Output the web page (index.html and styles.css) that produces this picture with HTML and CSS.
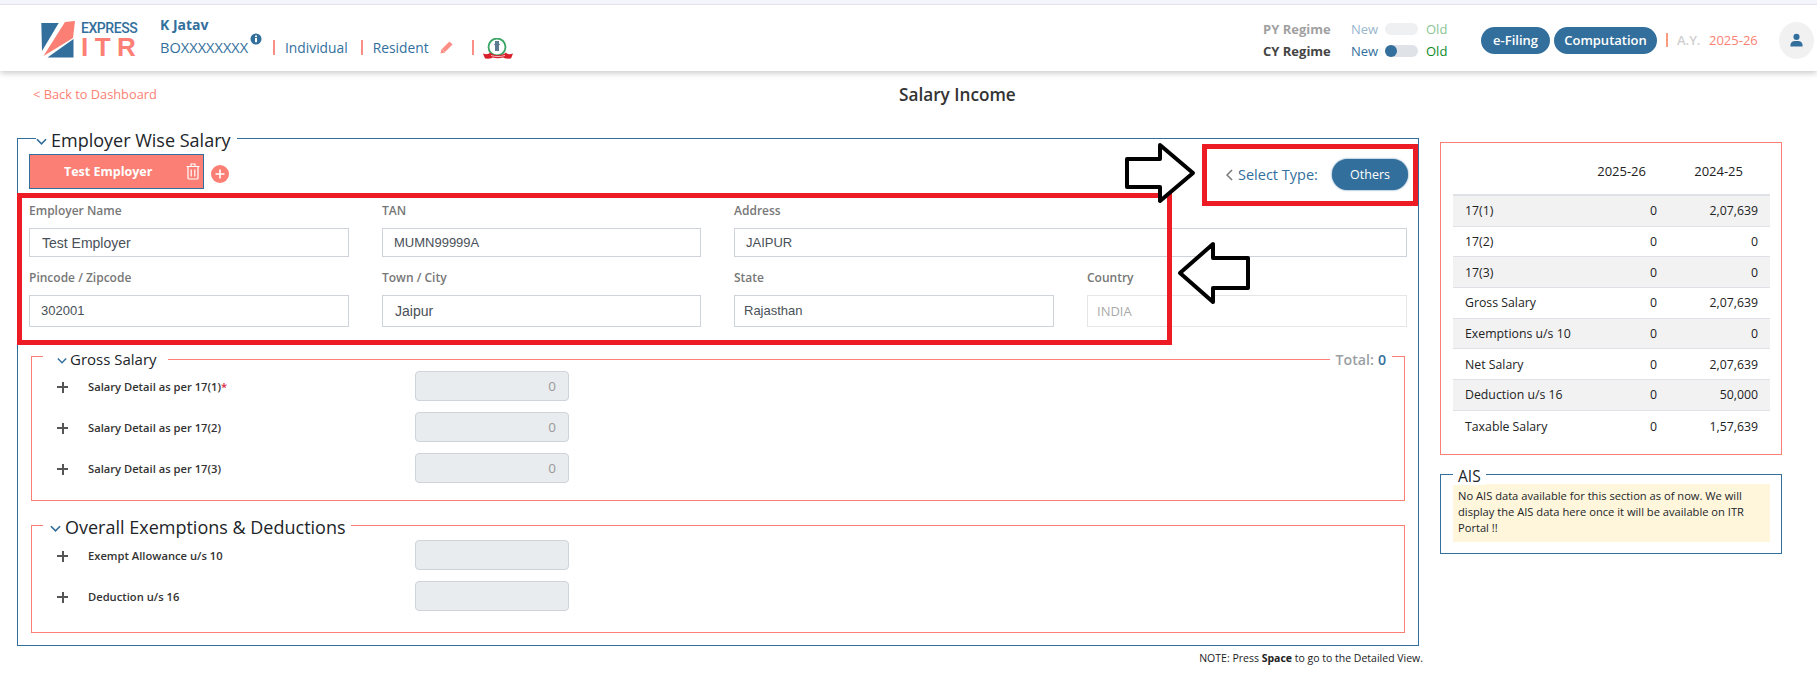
FILE: index.html
```html
<!DOCTYPE html>
<html lang="en">
<head>
<meta charset="utf-8">
<title>Salary Income</title>
<link rel="stylesheet" href="styles.css">
</head>
<body>
<div class="page">
  <header class="topbar">
    <div class="brand">
      <svg class="brand-mark" viewBox="0 0 34 38"><polygon points="0.3,2 17.7,2 1,30" fill="#336f9c"/><polygon points="24,1 34,0 32,17 2.5,35" fill="#fb7f74"/><polygon points="32.5,18 32.5,36.5 6.5,36.5" fill="#336f9c"/></svg>
      <div class="brand-text"><span class="brand-top">EXPRESS</span><span class="brand-bottom">ITR</span></div>
    </div>
    <div class="who">
      <div class="who-name">K Jatav</div>
      <div class="who-line">
        <span class="who-pan">BOXXXXXXXX</span>
        <svg class="who-info" viewBox="0 0 12 12"><circle cx="6" cy="6" r="5.500" fill="#336f9c"/><rect x="5" y="5" width="2" height="4.200" fill="#fff"/><rect x="5" y="2.500" width="2" height="1.600" fill="#fff"/></svg>
        <span class="who-item who-first">Individual</span>
        <span class="who-item">Resident</span>
        <svg class="who-pencil" viewBox="0 0 14 14"><path d="M3.500 10.500L11 3" stroke="#fb8f85" stroke-width="4.400" fill="none"/><path d="M0.500 13.500l1-4.800 3.800 3.800z" fill="#fb8f85"/></svg>
        <span class="who-bar"></span>
        <svg class="who-emblem" viewBox="0 0 30 21"><circle cx="14" cy="9" r="8.500" fill="#fff" stroke="#3aa566" stroke-width="1.800"/><path d="M12 3h4v2.500l1 1-1 1v5.500h-4V7.500l-1-1 1-1z" fill="#5d7a93"/><path d="M0 15.500c4 1.500 6 .5 7-1 4 3.500 12 3.500 16 0 1 1.500 3 2.500 7 1l-2 5c-5 .5-7-.5-8-1-3 1-7 1-10 0-1 .5-3 1.500-8 1z" fill="#d81f2b"/><path d="M8 17.500c4 1.400 10 1.400 14 0" stroke="#f6b9bd" stroke-width="1" fill="none"/></svg>
      </div>
    </div>
    <div class="regimes">
      <div class="regime regime-off">
        <span class="regime-name">PY Regime</span><span class="regime-new">New</span><span class="switch"></span><span class="regime-old">Old</span>
      </div>
      <div class="regime">
        <span class="regime-name">CY Regime</span><span class="regime-new">New</span><span class="switch"><span class="switch-knob"></span></span><span class="regime-old">Old</span>
      </div>
    </div>
    <div class="pill pill-efile">e-Filing</div>
    <div class="pill pill-comp">Computation</div>
    <span class="ay-bar"></span>
    <span class="ay-label">A.Y.</span>
    <span class="ay-value">2025-26</span>
    <div class="avatar"><svg viewBox="0 0 14 14"><circle cx="7" cy="3.700" r="3.300" fill="#336f9c"/><path d="M.5 14v-1.500C.5 9.500 3 8 5 8h4c2 0 4.500 1.500 4.500 4.500V14z" fill="#336f9c"/></svg></div>
  </header>

  <div class="crumbs">
    <a class="back">&lt; Back to Dashboard</a>
    <h1 class="title">Salary Income</h1>
  </div>

  <main class="content">
    <section class="employer">
      <div class="legend legend-emp"><svg class="chev" viewBox="0 0 12 8"><path d="M1 1l5 5 5-5" fill="none" stroke="#336f9c" stroke-width="1.800"/></svg>Employer Wise Salary</div>
      <div class="tabs">
        <div class="tab"><span class="tab-name">Test Employer</span>
          <svg class="tab-trash" viewBox="0 0 14 17"><path d="M.5 3.500h13M5 3.500V1h4v2.500M2 3.500v11.500a1 1 0 0 0 1 1h8a1 1 0 0 0 1-1V3.500M5.200 6.500v7M8.800 6.500v7" fill="none" stroke="#fff" stroke-width="1.200"/></svg>
        </div>
        <svg class="tab-add" viewBox="0 0 18 18"><circle cx="9" cy="9" r="9" fill="#fb7f74"/><path d="M9 4.500v9M4.500 9h9" stroke="#fff" stroke-width="1.600"/></svg>
        <div class="type">
          <svg class="type-chev" viewBox="0 0 7 12"><path d="M6 1L1 6l5 5" fill="none" stroke="#777" stroke-width="1.500"/></svg>
          <span class="type-label">Select Type:</span>
          <span class="type-btn">Others</span>
        </div>
      </div>
      <div class="form">
        <div class="field"><label class="lbl">Employer Name</label><div class="box">Test Employer</div></div>
        <div class="field"><label class="lbl">TAN</label><div class="box box-sm">MUMN99999A</div></div>
        <div class="field field-wide"><label class="lbl">Address</label><div class="box box-sm">JAIPUR</div></div>
        <div class="field field-b"><label class="lbl">Pincode / Zipcode</label><div class="box box-sm">302001</div></div>
        <div class="field field-b"><label class="lbl">Town / City</label><div class="box">Jaipur</div></div>
        <div class="field field-b"><label class="lbl">State</label><div class="box box-sm box-state">Rajasthan</div></div>
        <div class="field field-b"><label class="lbl">Country</label><div class="box box-off">INDIA</div></div>
      </div>

      <section class="group group-gross">
        <span class="gross-rule"></span>
        <div class="legend legend-gross"><svg class="chev chev-sm" viewBox="0 0 12 8"><path d="M1 1l5 5 5-5" fill="none" stroke="#336f9c" stroke-width="1.800"/></svg>Gross Salary</div>
        <div class="legend legend-total">Total: <b>0</b></div>
        <div class="row"><span class="plus"></span><span class="row-label">Salary Detail as per 17(1)<i class="req">*</i></span><div class="amount">0</div></div>
        <div class="row"><span class="plus"></span><span class="row-label">Salary Detail as per 17(2)</span><div class="amount">0</div></div>
        <div class="row"><span class="plus"></span><span class="row-label">Salary Detail as per 17(3)</span><div class="amount">0</div></div>
      </section>

      <section class="group group-over">
        <div class="legend legend-over"><svg class="chev" viewBox="0 0 12 8"><path d="M1 1l5 5 5-5" fill="none" stroke="#336f9c" stroke-width="1.800"/></svg>Overall Exemptions &amp; Deductions</div>
        <div class="row"><span class="plus"></span><span class="row-label">Exempt Allowance u/s 10</span><div class="amount"></div></div>
        <div class="row"><span class="plus"></span><span class="row-label">Deduction u/s 16</span><div class="amount"></div></div>
      </section>
      <p class="note">NOTE: Press <b>Space</b> to go to the Detailed View.</p>
    </section>

    <aside class="side">
      <div class="summary">
        <div class="s-head"><span></span><span>2025-26</span><span>2024-25</span></div>
        <div class="s-row"><span>17(1)</span><span>0</span><span>2,07,639</span></div>
        <div class="s-row"><span>17(2)</span><span>0</span><span>0</span></div>
        <div class="s-row"><span>17(3)</span><span>0</span><span>0</span></div>
        <div class="s-row"><span>Gross Salary</span><span>0</span><span>2,07,639</span></div>
        <div class="s-row"><span>Exemptions u/s 10</span><span>0</span><span>0</span></div>
        <div class="s-row"><span>Net Salary</span><span>0</span><span>2,07,639</span></div>
        <div class="s-row"><span>Deduction u/s 16</span><span>0</span><span>50,000</span></div>
        <div class="s-row"><span>Taxable Salary</span><span>0</span><span>1,57,639</span></div>
      </div>
      <div class="ais">
        <div class="legend legend-ais">AIS</div>
        <div class="ais-msg">No AIS data available for this section as of now. We will display the AIS data here once it will be available on ITR Portal !!</div>
      </div>
    </aside>
  </main>

  <div class="mark mark-form"></div>
  <div class="mark mark-type"></div>
  <svg class="arrow arrow-r" viewBox="0 0 70 60"><polygon points="2,16 35,16 35,2 68,30 35,58 35,44 2,44" fill="#fff" stroke="#000" stroke-width="4" stroke-linejoin="round"/></svg>
  <svg class="arrow arrow-l" viewBox="0 0 72 62"><polygon points="2,31 35,2 35,16 70,16 70,46 35,46 35,60" fill="#fff" stroke="#000" stroke-width="4" stroke-linejoin="round"/></svg>
</div>
</body>
</html>
```
FILE: styles.css
```css
* { box-sizing: border-box; }
html, body { margin: 0; padding: 0; background: #fff; }
body { font-family: "Open Sans", "Noto Sans", sans-serif; color: #212529; }
.page { position: relative; width: 1817px; height: 694px; overflow: hidden; }

.topbar { display: flex; align-items: center; height: 71px; padding-top: 5px; padding-left: 41px; background: #fff; border-top: 4px solid #f4f5fc; box-shadow: 0 2px 6px rgba(0,0,0,.22); position: relative; }
.topbar::before { content: ""; position: absolute; left: 0; right: 0; top: 0; height: 1px; background: #e1e3ef; }
.brand { display: flex; align-items: center; width: 119px; flex: none; }
.brand-mark { width: 34px; height: 38px; flex: none; }
.brand-text { display: flex; flex-direction: column; margin-left: 6px; font-family: "Roboto", "Liberation Sans", sans-serif; }
.brand-top { font-size: 14px; line-height: 14px; font-weight: 500; color: #336f9c; letter-spacing: -.45px; }
.brand-bottom { font-family: "Liberation Sans", sans-serif; font-size: 26px; line-height: 24px; font-weight: 700; color: #fb7f74; letter-spacing: 6.500px; }
.who { width: 1103px; flex: none; color: #336f9c; font-size: 14px; }
.who-name { font-weight: 700; line-height: 18px; margin-top: -5px; }
.who-line { display: flex; align-items: center; height: 24px; margin-top: 1px; font-weight: 500; }
.who-pan { width: 90px; font-size: 14.600px; }
.who-info { width: 12px; height: 12px; margin-top: -16px; flex: none; }
.who-item { border-left: 2px solid #fb8f85; padding-left: 10px; line-height: 15px; margin-left: 13px; font-size: 13.800px; }
.who-first { margin-left: 11px; }
.who-pencil { width: 14px; height: 14px; margin-left: 11px; flex: none; }
.who-bar { width: 2px; height: 15px; background: #fb8f85; margin-left: 18px; }
.who-emblem { width: 30px; height: 21px; margin-left: 9px; margin-top: 3px; flex: none; }

.regimes { width: 218px; flex: none; }
.regime { display: flex; align-items: center; height: 22px; font-size: 13px; }
.regime-name { width: 88px; font-weight: 700; color: #444; }
.regime-new { width: 34px; color: #336f9c; }
.regime-old { margin-left: 8px; color: #0a8a1e; }
.switch { width: 33px; height: 12px; border-radius: 6px; background: #dfe2e6; display: block; flex: none; }
.switch-knob { display: block; width: 12px; height: 12px; border-radius: 50%; background: #336f9c; }
.regime-off { opacity: .5; }
.pill { height: 27px; line-height: 27px; border-radius: 14px; background: #336f9c; color: #fff; font-size: 13px; font-weight: 600; text-align: center; flex: none; }
.pill-efile { width: 69px; }
.pill-comp { width: 103px; margin-left: 4px; }
.ay-bar { width: 2px; height: 14px; background: #fb9a7f; margin-left: 9px; flex: none; }
.ay-label { width: 32px; margin-left: 9px; font-size: 13px; font-weight: 600; color: #cfcfcf; flex: none; }
.ay-value { width: 70px; font-size: 13px; color: #fb7f74; flex: none; }
.avatar { width: 35px; height: 37px; border-radius: 50%; background: #f1f1f2; display: flex; align-items: center; justify-content: center; flex: none; }
.avatar svg { width: 13px; height: 14px; }

.crumbs { display: grid; grid-template-columns: 866px auto; padding-left: 33px; height: 46px; align-items: center; }
.back { font-size: 12.800px; color: #fb7f74; }
.title { margin: 0; font-size: 17.200px; font-weight: 600; color: #333; }

.content { display: flex; align-items: flex-start; padding-left: 17px; padding-top: 21px; }
.employer { position: relative; width: 1402px; height: 508px; border: 1px solid #336f9c; padding: 15px 10px 12px 11px; flex: none; }

.legend { position: absolute; background: #fff; display: flex; align-items: center; white-space: nowrap; color: #212529; }
.chev { width: 11px; height: 8px; margin-right: 4px; margin-top: 4px; flex: none; }
.chev-sm { width: 10px; margin-right: 3px; margin-top: 3px; }
.legend-emp { left: 18px; top: -9px; height: 20px; padding: 0 6px 0 0; font-size: 18px; font-weight: 500; }
.legend-gross { left: 11px; top: -7px; height: 18px; padding: 0 11px 0 14px; font-size: 15px; }
.legend-total { right: 12px; top: -7px; height: 18px; padding: 0 6px; font-size: 14.200px; color: #9a9fa6; font-weight: 600; }
.legend-total b { color: #336f9c; margin-left: 4px; font-weight: 600; }
.legend-over { left: 11px; top: -9px; height: 20px; padding: 0 5px 0 7px; font-size: 18px; }
.legend-ais { left: 12px; top: -8px; height: 18px; padding: 0 5px; font-size: 15.500px; }

.tabs { display: flex; align-items: flex-start; height: 35px; }
.tab { width: 175px; height: 35px; background: #fb7f74; border: 1px solid #336f9c; display: flex; align-items: center; color: #fff; font-size: 12.500px; font-weight: 700; flex: none; }
.tab-name { width: 156px; padding-left: 34px; }
.tab-trash { width: 14px; height: 17px; flex: none; }
.tab-add { width: 18px; height: 18px; margin: 11px 0 0 7px; flex: none; }
.type { margin-left: auto; display: flex; align-items: center; height: 31px; margin-top: 5px; }
.type-chev { width: 7px; height: 12px; margin-right: 5px; }
.type-label { font-size: 14.500px; font-weight: 500; color: #336f9c; width: 94px; }
.type-btn { width: 76px; height: 31px; line-height: 31px; border-radius: 16px; background: #336f9c; color: #fff; font-size: 12.500px; text-align: center; box-shadow: 0 0 2px #336f9c; }

.form { display: grid; grid-template-columns: 320px 319px 320px 320px; column-gap: 33px; }
.field { display: flex; flex-direction: column; }
.field-wide { grid-column: span 2; }
.lbl { height: 39px; line-height: 43px; font-size: 12px; font-weight: 600; color: #777; }
.box { height: 29px; line-height: 28px; border: 1px solid #ced4da; padding-left: 12px; font-family: "Liberation Sans", sans-serif; font-size: 14px; color: #495057; }
.box-sm { font-size: 13px; padding-left: 11px; }
.box-state { padding-left: 9px; }
.field-b .lbl { height: 38px; line-height: 41px; }
.field-b .box { height: 32px; line-height: 30px; }
.box-off { border-color: #e6e6e6; color: #aaa; font-family: "Open Sans", sans-serif; font-size: 13px; padding-left: 9px; }

.group { position: relative; margin-left: 2px; margin-right: 3px; border: 1px solid #fb7f74; padding-left: 25px; }
.group-gross { margin-top: 29px; padding-top: 14px; padding-bottom: 17px; height: 145px; }
.group-over { margin-top: 24px; padding-top: 14px; height: 108px; }
.gross-rule { position: absolute; left: 11px; right: 12px; top: -1px; height: 4px; background: #fff; border-bottom: 1px solid #fb7f74; }
.row { display: flex; align-items: center; height: 30px; margin-bottom: 11px; }
.plus { position: relative; width: 11px; height: 11px; flex: none; margin-top: 2px; }
.plus::before { content: ""; position: absolute; left: 0; right: 0; top: 4.500px; height: 2px; background: #555; }
.plus::after { content: ""; position: absolute; top: 0; bottom: 0; left: 4.500px; width: 2px; background: #555; }
.row-label { width: 327px; margin-left: 20px; font-size: 11.200px; font-weight: 600; color: #333; flex: none; }
.req { color: #e0263a; font-style: normal; }
.amount { width: 154px; height: 30px; line-height: 28px; background: #e9ecef; border: 1px solid #ced4da; border-radius: 4px; text-align: right; padding-right: 12px; font-size: 13.500px; color: #999; flex: none; }
.note { position: absolute; right: -5px; top: 512px; margin: 0; font-size: 10.500px; color: #222; white-space: nowrap; }

.side { margin-left: 21px; padding-top: 4px; width: 342px; flex: none; }
.summary { height: 313px; border: 1px solid #fb7f74; padding: 0 11px 0 12px; }
.s-head { display: grid; grid-template-columns: 133px 60px 97px; height: 53px; border-bottom: 2px solid #dee2e6; font-size: 13px; line-height: 56px; font-weight: 500; color: #222; text-align: right; }
.s-row { display: grid; grid-template-columns: 132px 60px 101px; height: 30.670px; align-items: center; border-bottom: 1px solid #dee2e6; font-size: 12.300px; color: #222; padding-left: 12px; text-align: right; }
.s-row span:first-child { text-align: left; }
.s-row:nth-child(even) { background: #f2f2f3; }
.s-row:last-child { border-bottom: 0; padding-top: 2px; }
.ais { position: relative; margin-top: 19px; height: 80px; border: 1px solid #336f9c; padding: 9px 11px 0 12px; }
.ais-msg { height: 58px; background: #fff6dc; padding: 4px 5px; font-size: 11.150px; line-height: 16px; color: #212529; }

.mark { position: absolute; border: 5px solid #ed1c24; pointer-events: none; }
.mark-form { left: 17px; top: 193px; width: 1155px; height: 152px; }
.mark-type { left: 1202px; top: 144px; width: 216px; height: 62px; }
.arrow { position: absolute; overflow: visible; }
.arrow-r { left: 1125px; top: 143px; width: 70px; height: 60px; }
.arrow-l { left: 1178px; top: 242px; width: 72px; height: 62px; }
```
